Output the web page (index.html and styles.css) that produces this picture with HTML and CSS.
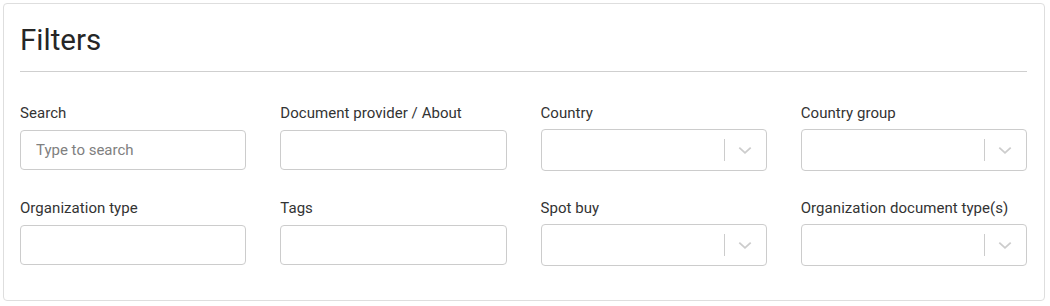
FILE: index.html
```html
<!DOCTYPE html>
<html>
<head>
<meta charset="utf-8">
<link rel="stylesheet" href="styles.css">
</head>
<body>
<section class="card">
  <h2 class="title">Filters</h2>
  <hr class="divider">
  <div class="grid">
    <div class="field">
      <label class="label">Search</label>
      <div class="control"><input class="text-input" type="text" placeholder="Type to search"></div>
    </div>
    <div class="field">
      <label class="label">Document provider / About</label>
      <div class="control"><input class="text-input" type="text"></div>
    </div>
    <div class="field">
      <label class="label">Country</label>
      <div class="control">
        <div class="select">
          <span class="select-value"></span>
          <span class="sep"></span>
          <span class="chev"><svg width="20" height="20" viewBox="0 0 20 20"><path d="M4.3 7.6 L10 12.8 L15.7 7.6" fill="none" stroke="#cccccc" stroke-width="1.8"/></svg></span>
        </div>
      </div>
    </div>
    <div class="field">
      <label class="label">Country group</label>
      <div class="control">
        <div class="select">
          <span class="select-value"></span>
          <span class="sep"></span>
          <span class="chev"><svg width="20" height="20" viewBox="0 0 20 20"><path d="M4.3 7.6 L10 12.8 L15.7 7.6" fill="none" stroke="#cccccc" stroke-width="1.8"/></svg></span>
        </div>
      </div>
    </div>
    <div class="field">
      <label class="label">Organization type</label>
      <div class="control"><input class="text-input" type="text"></div>
    </div>
    <div class="field">
      <label class="label">Tags</label>
      <div class="control"><input class="text-input" type="text"></div>
    </div>
    <div class="field">
      <label class="label">Spot buy</label>
      <div class="control">
        <div class="select">
          <span class="select-value"></span>
          <span class="sep"></span>
          <span class="chev"><svg width="20" height="20" viewBox="0 0 20 20"><path d="M4.3 7.6 L10 12.8 L15.7 7.6" fill="none" stroke="#cccccc" stroke-width="1.8"/></svg></span>
        </div>
      </div>
    </div>
    <div class="field">
      <label class="label">Organization document type(s)</label>
      <div class="control">
        <div class="select">
          <span class="select-value"></span>
          <span class="sep"></span>
          <span class="chev"><svg width="20" height="20" viewBox="0 0 20 20"><path d="M4.3 7.6 L10 12.8 L15.7 7.6" fill="none" stroke="#cccccc" stroke-width="1.8"/></svg></span>
        </div>
      </div>
    </div>
  </div>
</section>
</body>
</html>
```

FILE: styles.css
```css
html, body {
  margin: 0;
  padding: 0;
  background: #ffffff;
}
body {
  font-family: Roboto, "Liberation Sans", Arial, sans-serif;
  color: #333333;
}
.card {
  box-sizing: border-box;
  width: 1042px;
  margin: 3px 0 0 3px;
  border: 1px solid #dedede;
  border-radius: 4px;
  padding: 18px 17px 34px 16px;
  background: #fff;
}
.title {
  margin: 0;
  font-size: 29.5px;
  font-weight: 400;
  line-height: 36px;
  color: #262626;
}
.divider {
  margin: 13px 0 0 0;
  border: 0;
  height: 1px;
  background: #cfcfcf;
}
.grid {
  margin-top: 31px;
  display: grid;
  grid-template-columns: repeat(4, 1fr);
  column-gap: 34px;
  row-gap: 27px;
}
.field {
  display: flex;
  flex-direction: column;
}
.label {
  font-size: 15px;
  line-height: 20px;
  color: #333333;
  margin-bottom: 6px;
  letter-spacing: 0.05px;
}
.control {
  height: 42px;
  display: flex;
  flex-direction: column;
  justify-content: center;
}
.text-input {
  box-sizing: border-box;
  width: 100%;
  height: 40px;
  margin: 0;
  border: 1px solid #cccccc;
  border-radius: 4px;
  padding: 0 15px;
  font-family: Roboto, "Liberation Sans", Arial, sans-serif;
  font-size: 15px;
  color: #333333;
  outline: none;
}
.text-input::placeholder {
  color: #808080;
}
.select {
  box-sizing: border-box;
  height: 42px;
  border: 1px solid #cccccc;
  border-radius: 4px;
  display: flex;
  align-items: center;
}
.select-value {
  flex: 1;
}
.sep {
  width: 1px;
  height: 22px;
  background: #cccccc;
}
.chev {
  width: 20px;
  height: 20px;
  padding: 0 11px 0 10px;
  display: flex;
}
```
